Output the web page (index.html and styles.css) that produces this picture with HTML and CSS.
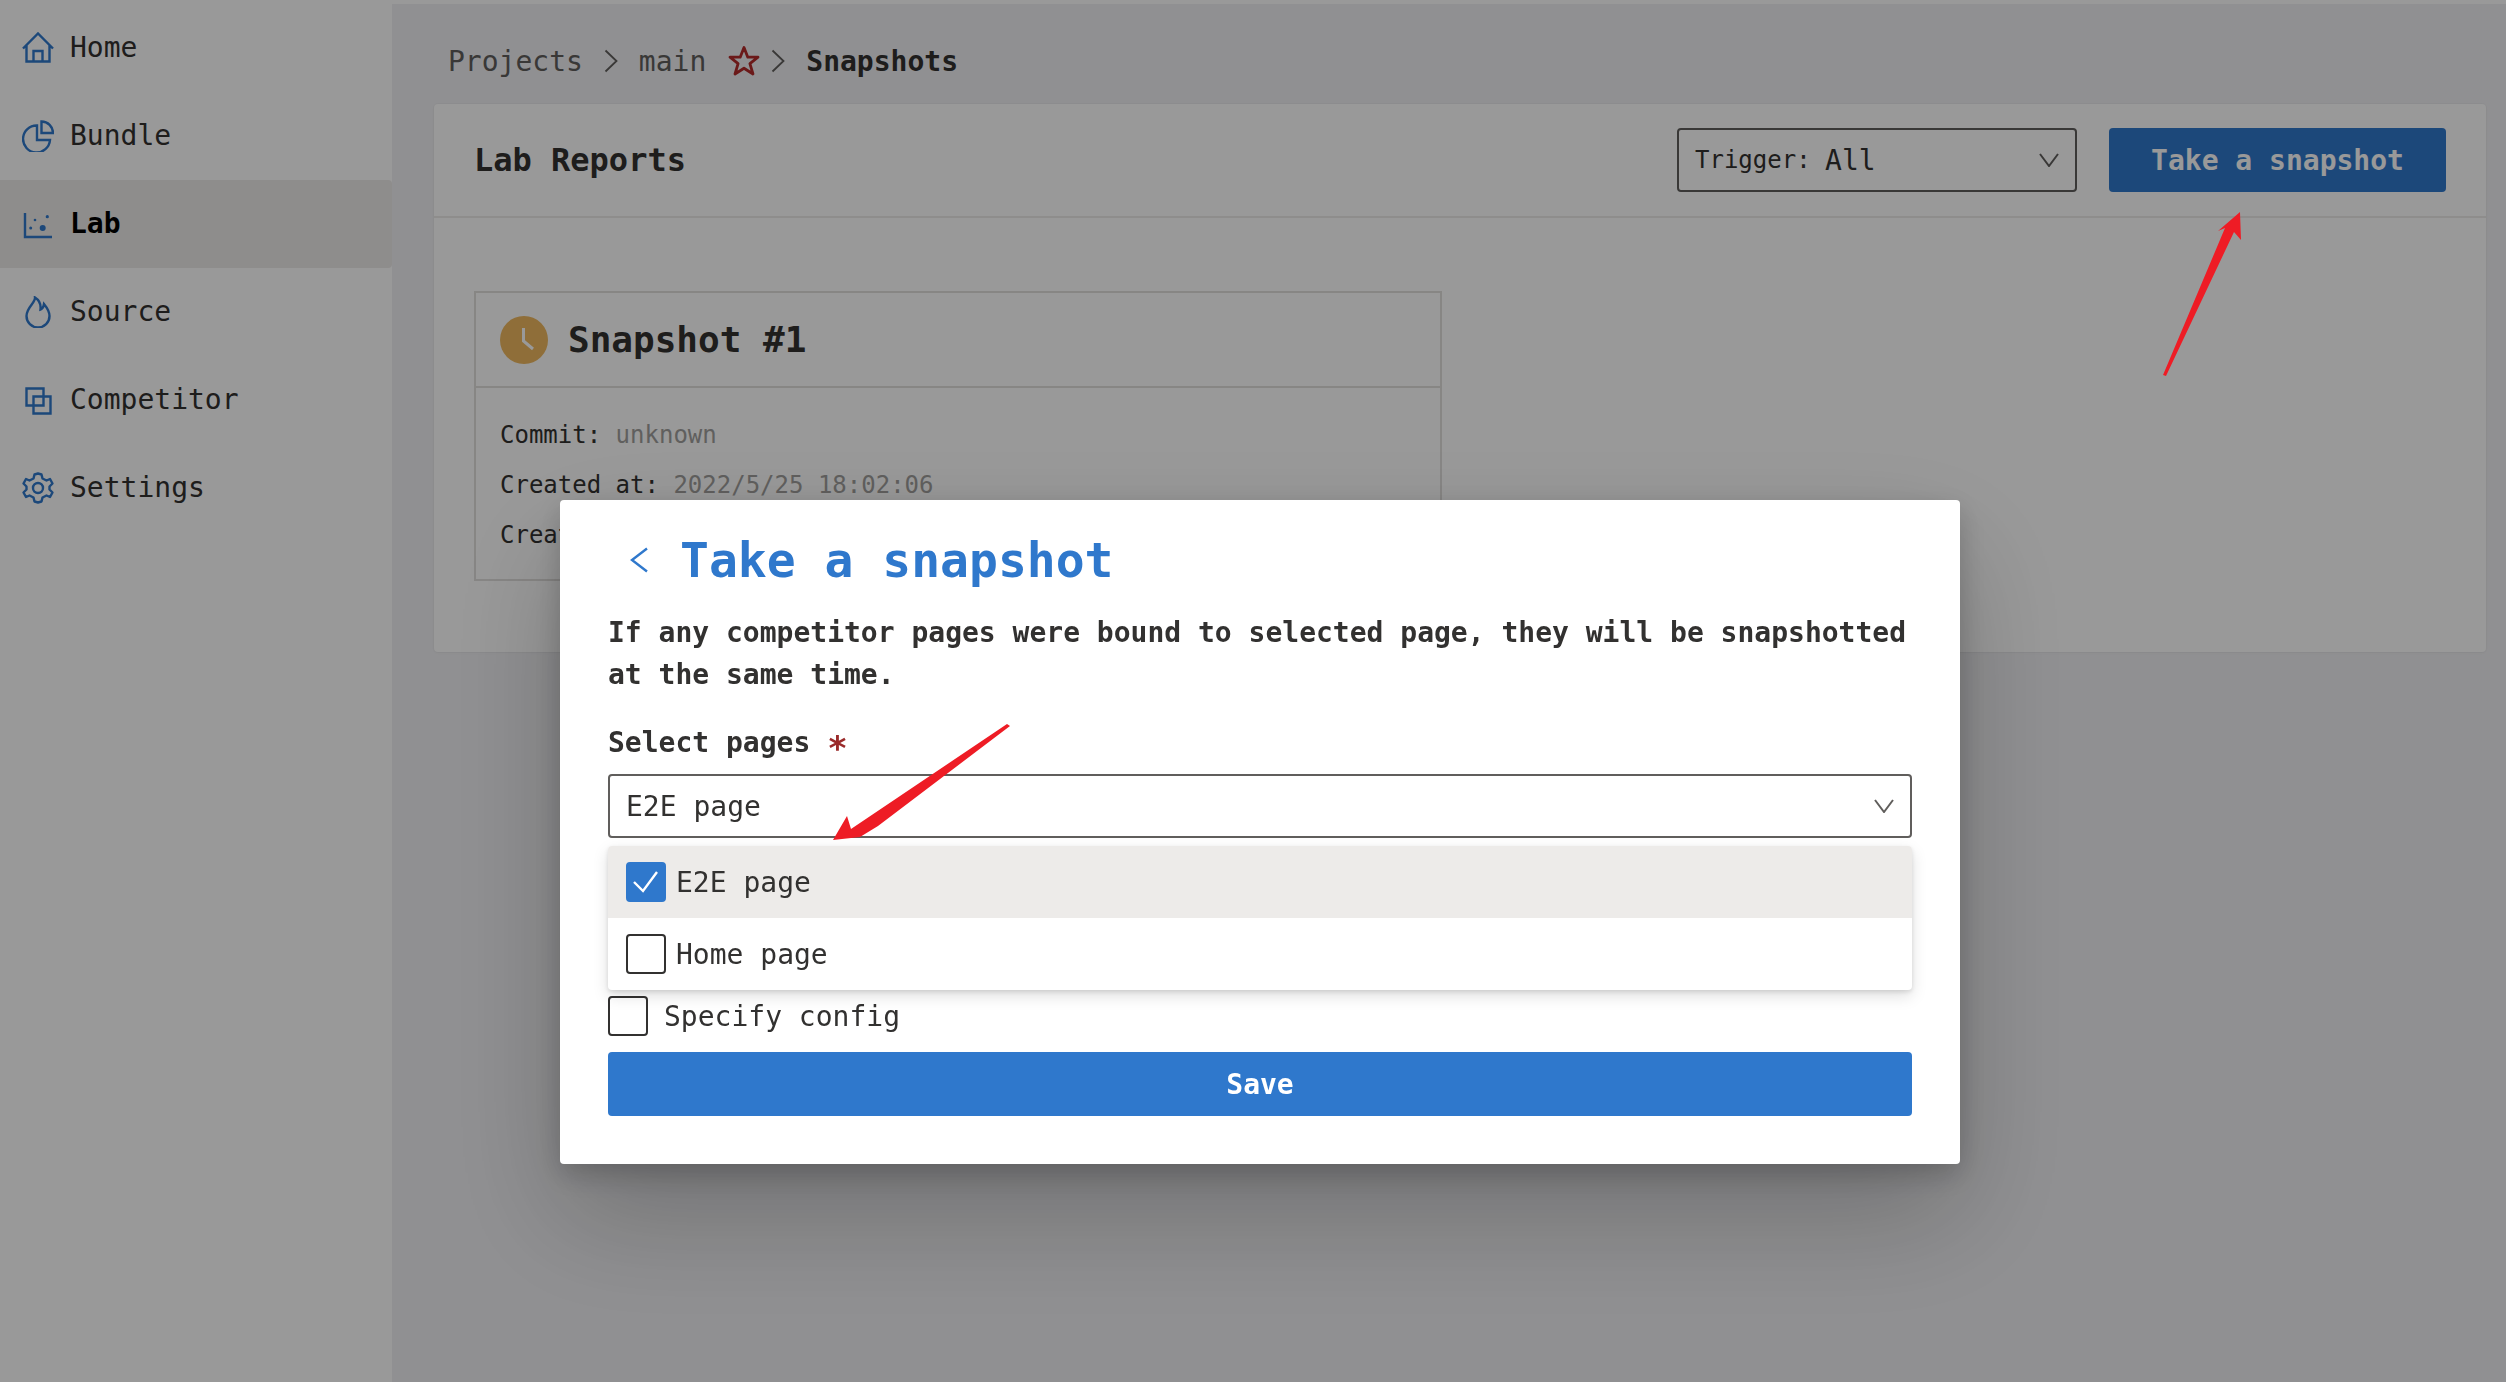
FILE: index.html
```html
<!DOCTYPE html>
<html lang="en">
<head>
<meta charset="utf-8">
<title>Lab Reports</title>
<link rel="stylesheet" href="styles.css">
</head>
<body>
<div class="app">
  <nav class="sidebar">
    <a class="nav-item">
      <svg class="nav-icon" viewBox="0 0 32 32"><path d="M1 16.500 16 1.500 31 16.500M4.500 13.500V29.500H27.500V13.500M11.500 29.500V19H20.500V29.500"/></svg>
      <span>Home</span>
    </a>
    <a class="nav-item">
      <svg class="nav-icon" viewBox="0 0 32 32"><path d="M15 5.500A13.500 13.500 0 1 0 28 20H15ZM19.500 1.500A11.500 11.500 0 0 1 31 13H19.500Z"/></svg>
      <span>Bundle</span>
    </a>
    <a class="nav-item active">
      <svg class="nav-icon" viewBox="0 0 32 32"><path d="M3 5V29H30"/><circle class="dot" cx="8.700" cy="20" r="1.500"/><circle class="dot" cx="13" cy="12" r="1.300"/><circle class="dot" cx="20.700" cy="20" r="3"/><circle class="dot" cx="25.300" cy="8.700" r="1.600"/></svg>
      <span>Lab</span>
    </a>
    <a class="nav-item">
      <svg class="nav-icon" viewBox="0 0 32 32"><path d="M13 1.500C13.500 7 4.500 11 4.500 20A11.500 11.500 0 0 0 27.500 20C27.500 14.500 24.500 11 22 8C21.500 11 20 13 18.500 13.500C19 9 17 4 13 1.500Z"/></svg>
      <span>Source</span>
    </a>
    <a class="nav-item">
      <svg class="nav-icon" viewBox="0 0 32 32"><path d="M4.500 4.500H21.500V21.500H4.500ZM11.500 12.500H28.500V29.500H11.500ZM11.500 12.500H21.500V21.500H11.500Z"/></svg>
      <span>Competitor</span>
    </a>
    <a class="nav-item">
      <svg class="nav-icon gear" viewBox="0 0 32 32"><path d="M12.500 2.500 16 1.500 19.500 2.500 20.500 6.500 24.500 8.500 28 7 30.500 11.500 27.500 14.500V17.500L30.500 20.500 28 25 24.500 23.500 20.500 25.500 19.500 29.500 16 30.500 12.500 29.500 11.500 25.500 7.500 23.500 4 25 1.500 20.500 4.500 17.500V14.500L1.500 11.500 4 7 7.500 8.500 11.500 6.500Z"/><circle cx="16" cy="16" r="5"/></svg>
      <span>Settings</span>
    </a>
  </nav>

  <main class="main">
    <div class="breadcrumb">
      <span class="crumb">Projects</span>
      <svg class="crumb-sep" viewBox="0 0 14 24"><path d="M1.500 1.500 12.500 12 1.500 22.500"/></svg>
      <span class="crumb">main</span>
      <svg class="star" viewBox="0 0 32 32"><path d="M16 2.500 19.800 12.200H30L21.900 18.700 25 29 16 23.200 7 29 10.100 18.700 2 12.200H12.200Z"/></svg>
      <svg class="crumb-sep" viewBox="0 0 14 24"><path d="M1.500 1.500 12.500 12 1.500 22.500"/></svg>
      <span class="crumb-current">Snapshots</span>
    </div>

    <section class="panel">
      <header class="panel-head">
        <h2 class="panel-title">Lab Reports</h2>
        <div class="panel-actions">
          <div class="trigger">
            <span class="trigger-label">Trigger: </span><span class="trigger-value">All</span>
            <svg class="chevron" viewBox="0 0 20 14"><path d="M1 1 10 13 19 1"/></svg>
          </div>
          <button class="btn-take">Take a snapshot</button>
        </div>
      </header>
      <div class="panel-body">
        <article class="card">
          <div class="card-head">
            <svg class="clock" viewBox="0 0 48 48"><circle class="clock-face" cx="24" cy="24" r="24"/><path class="clock-hand" d="M23.500 12V25L33 33"/></svg>
            <h3 class="card-title">Snapshot #1</h3>
          </div>
          <div class="card-body">
            <p class="card-line">Commit: <span class="muted">unknown</span></p>
            <p class="card-line">Created at: <span class="muted">2022/5/25 18:02:06</span></p>
            <p class="card-line">Created by: <span class="muted">CI</span></p>
          </div>
        </article>
      </div>
    </section>
  </main>
</div>

<div class="overlay">
  <div class="modal">
    <div class="modal-head">
      <svg class="back" viewBox="0 0 18 26"><path d="M17 1.500 2 13 17 24.500"/></svg>
      <h1 class="modal-title">Take a snapshot</h1>
    </div>
    <p class="modal-desc">If any competitor pages were bound to selected page, they will be snapshotted at the same time.</p>
    <label class="field-label">Select pages <span class="req">*</span></label>
    <div class="select-wrap">
      <div class="select">
        <span>E2E page</span>
        <svg class="chevron" viewBox="0 0 20 14"><path d="M1 1 10 13 19 1"/></svg>
      </div>
      <ul class="dropdown">
        <li class="option selected">
          <span class="check on"><svg viewBox="0 0 40 40"><path d="M8 20 17 29 31 10"/></svg></span>
          <span>E2E page</span>
        </li>
        <li class="option">
          <span class="check"></span>
          <span>Home page</span>
        </li>
      </ul>
    </div>
    <div class="specify">
      <span class="check"></span>
      <span>Specify config</span>
    </div>
    <button class="btn-save">Save</button>
  </div>
</div>

<svg class="annotation" viewBox="0 0 2506 1382">
  <path d="M2163 375 2225 228 2218 231 2240 212 2241 240 2234 232 2166 376Z"/>
  <path d="M1010 726 878 826 860 837 833 840 847 816 851 829 1007 724Z"/>
</svg>
</body>
</html>
```
FILE: styles.css
```css
* { box-sizing: border-box; }
html, body { margin: 0; height: 100%; }
body {
  font-family: "DejaVu Sans Mono", "Liberation Mono", monospace;
  font-size: 28px;
  color: #323130;
  background: #fff;
  overflow: hidden;
}
h1, h2, h3, p, ul { margin: 0; padding: 0; }
ul { list-style: none; }
button { font: inherit; border: 0; }

.app { display: flex; height: 1382px; }

.sidebar {
  width: 392px;
  flex: none;
  padding-top: 4px;
  background: #fff;
}
.nav-item {
  display: flex;
  align-items: center;
  gap: 16px;
  height: 88px;
  padding-left: 22px;
  border-radius: 0 4px 4px 0;
  line-height: 1;
}
.nav-item.active { background: #edebe9; font-weight: 700; color: #000; }
.nav-icon {
  width: 32px;
  height: 32px;
  flex: none;
  fill: none;
  stroke: #2f78cc;
  stroke-width: 2.4;
}
.nav-icon .dot { fill: #2f78cc; stroke: none; }
.gear { stroke-linejoin: round; }

.main {
  flex: 1;
  margin-top: 4px;
  padding-left: 42px;
  padding-right: 20px;
  background: #f0f0f3;
}

.breadcrumb {
  display: flex;
  align-items: center;
  height: 100px;
  padding: 14px 0 0 14px;
  gap: 21px;
}
.crumb { color: #605e5c; }
.crumb-current { font-weight: 700; }
.crumb-sep { width: 14px; height: 24px; fill: none; stroke: #605e5c; stroke-width: 1.8; flex: none; }
.star { width: 32px; height: 32px; fill: none; stroke: #b22a2a; stroke-width: 2.8; stroke-linejoin: round; margin: 0 -10px 0 1px; flex: none; }

.panel {
  height: 548px;
  background: #fff;
  border-radius: 4px;
  box-shadow: 0 0 0 1px rgba(0, 0, 0, 0.02), 0 1px 3px rgba(0, 0, 0, 0.03);
}
.panel-head {
  display: flex;
  align-items: center;
  justify-content: space-between;
  height: 114px;
  padding: 0 40px;
  border-bottom: 2px solid #edebe9;
}
.panel-title { font-size: 32px; font-weight: 700; }
.panel-actions { display: flex; align-items: center; gap: 32px; }

.trigger {
  display: flex;
  align-items: center;
  width: 400px;
  height: 64px;
  padding: 0 16px;
  border: 2px solid #605e5c;
  border-radius: 4px;
}
.trigger-label { font-size: 24px; white-space: pre; }
.trigger .chevron { margin-left: auto; }
.chevron { width: 20px; height: 14px; fill: none; stroke: #605e5c; stroke-width: 2; flex: none; }

.btn-take {
  width: 337px;
  height: 64px;
  background: #2f78cc;
  color: #fff;
  font-weight: 700;
  border-radius: 4px;
}

.panel-body { padding: 73px 40px 0; }
.card {
  width: 968px;
  height: 290px;
  border: 2px solid #e1dfdd;
}
.card-head {
  display: flex;
  align-items: center;
  gap: 20px;
  height: 95px;
  padding-left: 24px;
  border-bottom: 2px solid #e1dfdd;
}
.clock { width: 48px; height: 48px; flex: none; }
.clock-face { fill: #eeb85f; }
.clock-hand { fill: none; stroke: #fff; stroke-width: 3; }
.card-title { font-size: 36px; font-weight: 700; line-height: 1; }
.card-body { padding: 22px 24px; }
.card-line { font-size: 24px; line-height: 50px; }
.muted { color: #a19f9d; }

.overlay {
  position: fixed;
  inset: 0;
  background: rgba(0, 0, 0, 0.4);
}
.modal {
  position: absolute;
  left: 560px;
  top: 500px;
  width: 1400px;
  height: 664px;
  padding: 0 48px;
  background: #fff;
  border-radius: 4px;
  box-shadow: 0 51px 115px rgba(0, 0, 0, 0.22), 0 10px 29px rgba(0, 0, 0, 0.2);
}
.modal-head {
  display: flex;
  align-items: center;
  gap: 32px;
  height: 104px;
  padding: 20px 0 4px 22px;
}
.back { width: 18px; height: 26px; fill: none; stroke: #2f78cc; stroke-width: 2.4; flex: none; }
.modal-title { font-size: 48px; font-weight: 700; color: #2f78cc; line-height: 1; }
.modal-desc { font-weight: 700; line-height: 42px; margin-top: 8px; }
.field-label { display: block; font-weight: 700; line-height: 40px; margin-top: 27px; height: 39px; }
.req { color: #9a2a2a; font-size: 34px; line-height: 1; vertical-align: -8px; }

.select-wrap { position: relative; margin-top: 12px; }
.select {
  display: flex;
  align-items: center;
  justify-content: space-between;
  height: 64px;
  padding: 0 16px;
  border: 2px solid #605e5c;
  border-radius: 4px;
}
.dropdown {
  position: absolute;
  left: 0;
  right: 0;
  top: 72px;
  background: #fff;
  border-radius: 4px;
  box-shadow: 0 6px 16px rgba(0, 0, 0, 0.13), 0 2px 4px rgba(0, 0, 0, 0.11);
  overflow: hidden;
}
.option {
  display: flex;
  align-items: center;
  gap: 10px;
  height: 72px;
  padding-left: 18px;
}
.option.selected { background: #edebe9; }
.check {
  display: block;
  width: 40px;
  height: 40px;
  flex: none;
  border: 2px solid #323130;
  border-radius: 4px;
}
.check.on { background: #2f78cc; border-color: #2f78cc; position: relative; }
.check.on svg { display: block; position: absolute; inset: -2px; fill: none; stroke: #fff; stroke-width: 2.4; }

.specify {
  display: flex;
  align-items: center;
  gap: 16px;
  margin-top: 158px;
  height: 40px;
}
.btn-save {
  display: block;
  width: 100%;
  height: 64px;
  margin-top: 16px;
  background: #2f78cc;
  color: #fff;
  font-weight: 700;
  border-radius: 4px;
}

.annotation {
  position: fixed;
  inset: 0;
  width: 2506px;
  height: 1382px;
  fill: #ee1c25;
  pointer-events: none;
}
```
